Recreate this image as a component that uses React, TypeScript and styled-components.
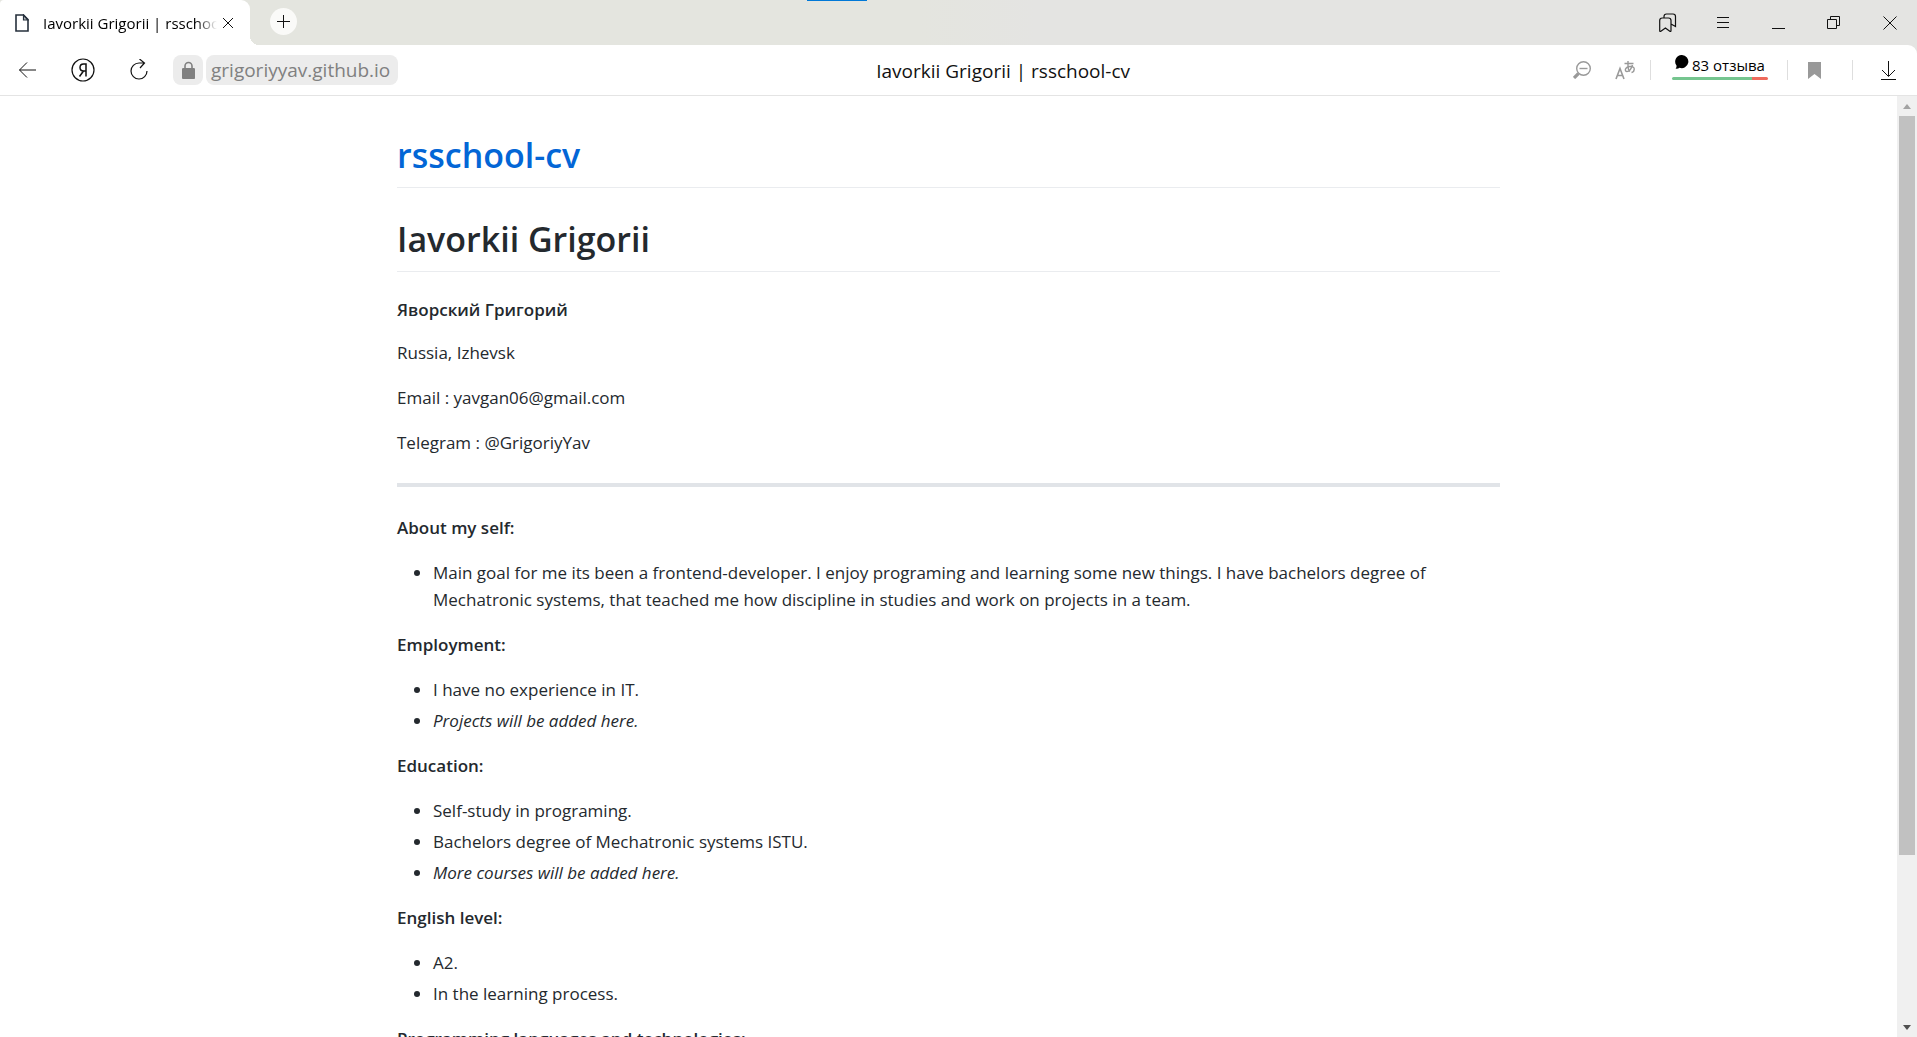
import React from "react";
import styled, { createGlobalStyle } from "styled-components";

const GlobalStyle = createGlobalStyle`
  * { box-sizing: border-box; }
  body {
    margin: 0;
    background: #fff;
    color: #24292e;
    font-family: "Open Sans", "Noto Sans", sans-serif;
  }
  button { font: inherit; color: inherit; border: 0; padding: 0; background: none; cursor: pointer; }
`;

const Window = styled.div`
  display: flex;
  flex-direction: column;
  height: 100vh;
  overflow: hidden;
  background: #fff;
`;

const TabStrip = styled.header`
  position: relative;
  display: flex;
  align-items: stretch;
  justify-content: space-between;
  height: 45px;
  flex: none;
  background: linear-gradient(90deg, #e4e5df 0%, #e4e5df 48%, #e4e4e2 54%, #e4e4e2 100%);
`;

const ActivityMark = styled.span`
  position: absolute;
  top: 0;
  left: calc(42% + 2px);
  width: 60px;
  height: 1px;
  background: #0078d7;
`;

const Tabs = styled.div`
  display: flex;
  align-items: center;
  gap: 20px;
`;

const Tab = styled.div`
  position: relative;
  display: flex;
  align-items: center;
  width: 250px;
  height: 45px;
  padding: 0 16px 0 15px;
  border-radius: 4px 9px 0 0;
  background: #fff;
  &::after {
    content: "";
    position: absolute;
    right: -9px;
    bottom: 0;
    width: 9px;
    height: 9px;
    background: radial-gradient(circle at 100% 0, transparent 9px, #fff 9px);
  }
`;

const TabTitle = styled.span`
  flex: 1;
  margin: 0 5px 0 14px;
  overflow: hidden;
  white-space: nowrap;
  font-size: 15px;
  line-height: 24px;
  color: #000;
  mask-image: linear-gradient(90deg, #000 88%, transparent 100%);
`;

const IconButton = styled.button<{ $w?: number; $h?: number }>`
  display: flex;
  align-items: center;
  justify-content: center;
  flex: none;
  width: ${(p) => p.$w ?? 24}px;
  height: ${(p) => p.$h ?? 24}px;
`;

const NewTab = styled(IconButton)`
  border-radius: 50%;
  background: #fafaf8;
  margin-bottom: 2px;
`;

const DownloadButton = styled(IconButton)`
  margin-left: 6px;
`;

const WindowControls = styled.div`
  display: flex;
  align-items: center;
`;

const Toolbar = styled.nav`
  display: flex;
  align-items: center;
  height: 51px;
  border-bottom: 1px solid #e4e4e4;
  border-top-right-radius: 9px;
  background: #fff;
`;

const ToolbarBack = styled.div`
  background: #e4e4e2;
  flex: none;
`;

const NavGroup = styled.div`
  display: flex;
  align-items: center;
`;

const Address = styled.div`
  display: flex;
  align-items: center;
  gap: 3px;
  margin-left: 7px;
`;

const Lock = styled(IconButton)`
  border-radius: 8px;
  background: #ececec;
`;

const Host = styled.button`
  height: 30px;
  padding: 1px 8px 0 5px;
  border-radius: 8px;
  background: #ececec;
  && { color: #808080; }
  font-size: 19px;
  line-height: 29px;
`;

const PageTitle = styled.span`
  flex: 1;
  padding: 1px 0 0 44px;
  overflow: hidden;
  color: #111;
  font-size: 19px;
  line-height: 30px;
  text-align: center;
  text-overflow: ellipsis;
  white-space: nowrap;
`;

const Tools = styled.div`
  display: flex;
  align-items: center;
  flex: none;
`;

const Divider = styled.span<{ $gap?: number }>`
  width: 1px;
  height: 20px;
  margin-left: ${(p) => p.$gap ?? 0}px;
  background: #dedede;
`;

const Reviews = styled.button`
  display: flex;
  flex-direction: column;
  gap: 2px;
  width: 96px;
  margin: 0 19px 6px 21px;
`;

const ReviewLabel = styled.span`
  display: flex;
  gap: 3px;
  padding-left: 3px;
  color: #000;
  font-size: 15px;
  line-height: 20px;
  white-space: nowrap;
`;

const ReviewBar = styled.span`
  display: block;
  width: 100%;
  height: 3px;
  border-radius: 2px;
  background: linear-gradient(90deg, #75c58f 83%, #ee6a5c 83%);
`;

const Viewport = styled.div`
  display: flex;
  flex: 1;
  min-height: 0;
`;

const Scroller = styled.main`
  flex: 1;
  min-width: 0;
  overflow: hidden;
`;

const Article = styled.article`
  max-width: 1139px;
  margin: 0 auto;
  padding: 35px 18px;
  font-size: 17px;
  line-height: 27px;
`;

const Title = styled.h1`
  margin: 0 0 27px;
  padding: 2px 0 9px;
  border-bottom: 1px solid #eaecef;
  font-size: 34px;
  font-weight: 600;
  line-height: 45px;
  a { color: #0366d6; text-decoration: none; }
`;

const FullName = styled.h4`
  margin: 0 0 18px;
  font-size: 17px;
  font-weight: 600;
  line-height: 22px;
`;

const Paragraph = styled.p`
  margin: 0 0 18px;
  strong { font-weight: 600; }
`;

const Rule = styled.hr`
  height: 4px;
  margin: 27px 0;
  border: 0;
  background: #e1e4e8;
`;

const List = styled.ul`
  margin: 0 0 18px;
  padding-left: 36px;
  li + li { margin-top: 4px; }
`;

const Scrollbar = styled.div`
  display: flex;
  flex-direction: column;
  flex: none;
  width: 20px;
  background: #f0f0f0;
`;

const Track = styled.div`
  flex: 1;
  padding: 0 2px;
`;

const Thumb = styled.div`
  height: 82%;
  background: #c1c1c1;
`;

const Icon = ({ w, h, children, ...rest }: { w: number; h: number; children: React.ReactNode } & React.SVGProps<SVGSVGElement>) => (
  <svg width={w} height={h} viewBox={`0 0 ${w} ${h}`} fill="none" stroke="#111" strokeWidth="1.2" aria-hidden="true" {...rest}>
    {children}
  </svg>
);

const sections: { title: string; items: { text: string; em?: boolean }[] }[] = [
  {
    title: "About my self:",
    items: [
      {
        text: "Main goal for me its been a frontend-developer. I enjoy programing and learning some new things. I have bachelors degree of Mechatronic systems, that teached me how discipline in studies and work on projects in a team.",
      },
    ],
  },
  {
    title: "Employment:",
    items: [{ text: "I have no experience in IT." }, { text: "Projects will be added here.", em: true }],
  },
  {
    title: "Education:",
    items: [
      { text: "Self-study in programing." },
      { text: "Bachelors degree of Mechatronic systems ISTU." },
      { text: "More courses will be added here.", em: true },
    ],
  },
  { title: "English level:", items: [{ text: "A2." }, { text: "In the learning process." }] },
  { title: "Programming languages and technologies:", items: [] },
];

export default function App() {
  return (
    <Window>
      <GlobalStyle />
      <TabStrip>
        <ActivityMark />
        <Tabs>
          <Tab>
            <Icon w={14} h={18} stroke="#26303c" strokeWidth="1.6">
              <path d="M1 1h7.5L13 5.5V17H1z" />
              <path d="M8.5 1v5H13z" fill="#26303c" fillOpacity="0.3" strokeWidth="1.2" />
            </Icon>
            <TabTitle>Iavorkii Grigorii | rsschool-cv</TabTitle>
            <IconButton $w={12} aria-label="Close tab">
              <Icon w={12} h={12} strokeWidth="1"><path d="M1 1l10 10M11 1L1 11" /></Icon>
            </IconButton>
          </Tab>
          <NewTab $w={27} $h={27} aria-label="New tab">
            <Icon w={13} h={13} strokeWidth="1"><path d="M6.5 0v13M0 6.5h13" /></Icon>
          </NewTab>
        </Tabs>
        <WindowControls>
          <IconButton $w={54} aria-label="Collections">
            <Icon w={18} h={20}>
              <path d="M.7 17.5V7.5Q.7 5 3.2 5h6.3Q12 5 12 7.5v10q0 1.5-1.2.7L6.4 15l-4.5 3.2Q.7 19 .7 17.5zM5 5V3.5Q5 1 7.5 1h6.5Q16.5 1 16.5 3.5V13.5L12 11" />
            </Icon>
          </IconButton>
          <IconButton $w={56} aria-label="Menu">
            <Icon w={12} h={12} strokeWidth="1"><path d="M0 .5h12M0 5.5h12M0 10.5h12" /></Icon>
          </IconButton>
          <IconButton $w={54} aria-label="Minimize">
            <Icon w={13} h={13} strokeWidth="1"><path d="M0 12.5h13" /></Icon>
          </IconButton>
          <IconButton $w={57} aria-label="Restore">
            <Icon w={13} h={13} strokeWidth="1"><path d="M.5 3.5h9v9h-9zM3.5 3.5v-3h9v9h-3" /></Icon>
          </IconButton>
          <IconButton $w={55} aria-label="Close window">
            <Icon w={14} h={14} strokeWidth="1"><path d="M.5.5l13 13M13.5.5l-13 13" /></Icon>
          </IconButton>
        </WindowControls>
      </TabStrip>
      <ToolbarBack>
        <Toolbar>
          <NavGroup>
            <IconButton $w={55} aria-label="Back">
              <Icon w={17} h={16} strokeWidth="1"><path d="M8 .5L.5 8 8 15.5M.5 8H17" /></Icon>
            </IconButton>
            <IconButton $w={56} aria-label="Yandex">
              <Icon w={24} h={24}>
                <circle cx="12" cy="12" r="11" />
                <path d="M15 18.5V6h-2.5Q9 6 9 9.5T12.5 13H15M12.5 13L8.500 18.5" strokeWidth="1.5" />
              </Icon>
            </IconButton>
            <IconButton $w={55} aria-label="Reload">
              <Icon w={18} h={22}><path d="M17 12a8 8 0 1 1-8-8h5M9.5 0l5 4-4.5 5" /></Icon>
            </IconButton>
            <Address>
              <Lock $w={30} $h={30} aria-label="Site information">
                <Icon w={13} h={18} stroke="#808080">
                  <path d="M3 8V5a3.5 3.5 0 0 1 7 0v3" strokeWidth="1.6" />
                  <rect x="0.5" y="7.5" width="12" height="10" rx="1" fill="#808080" />
                </Icon>
              </Lock>
              <Host>grigoriyyav.github.io</Host>
            </Address>
          </NavGroup>
          <PageTitle>Iavorkii Grigorii | rsschool-cv</PageTitle>
          <Tools>
            <IconButton $w={36} aria-label="Zoom out">
              <Icon w={18} h={18} stroke="#999" strokeWidth="1.4">
                <circle cx="10.5" cy="7.5" r="6.8" />
                <path d="M6.5 7.5h8" />
                <path d="M5.5 12.5L1 17" strokeWidth="3.2" />
              </Icon>
            </IconButton>
            <IconButton $w={50} aria-label="Translate">
              <Icon w={20} h={20} stroke="#999">
                <path d="M1 19L5 8.5L9 19M2.5 15.5h5" strokeWidth="1.6" />
                <path d="M9.5 3.5h9M13 1v5q0 4 2 5.5M17.5 5q-2 6.5-5.5 6.5-2 0-1.5-2.5Q12 6 16 6.5t3 3.5Q19 12 16.5 12.5" strokeWidth="1.4" />
              </Icon>
            </IconButton>
            <Divider />
            <Reviews>
              <ReviewLabel>
                <Icon w={14} h={14} stroke="none">
                  <path d="M7 0a6.6 6.6 0 1 1-2.5 12.8Q3 14 .6 13.6 1.8 12.5 1.5 10.5A6.6 6.6 0 0 1 7 0z" fill="#000" />
                </Icon>
                83 отзыва
              </ReviewLabel>
              <ReviewBar />
            </Reviews>
            <Divider />
            <IconButton $w={52} aria-label="Bookmark">
              <Icon w={13} h={17} stroke="none"><path d="M0 0h13v17l-6.5-5L0 17z" fill="#999" /></Icon>
            </IconButton>
            <Divider $gap={12} />
            <DownloadButton $w={58} aria-label="Downloads">
              <Icon w={15} h={19} strokeWidth="1"><path d="M7.5 0v15M1 9l6.5 6.500L14 9M0 18.5h15" /></Icon>
            </DownloadButton>
          </Tools>
        </Toolbar>
      </ToolbarBack>
      <Viewport>
        <Scroller>
          <Article>
            <Title><a href="#top">rsschool-cv</a></Title>
            <Title>Iavorkii Grigorii</Title>
            <FullName>Яворский Григорий</FullName>
            <Paragraph>Russia, Izhevsk</Paragraph>
            <Paragraph>Email : yavgan06@gmail.com</Paragraph>
            <Paragraph>Telegram : @GrigoriyYav</Paragraph>
            <Rule />
            {sections.map((s) => (
              <React.Fragment key={s.title}>
                <Paragraph><strong>{s.title}</strong></Paragraph>
                {s.items.length > 0 && (
                  <List>
                    {s.items.map((i) => (
                      <li key={i.text}>{i.em ? <em>{i.text}</em> : i.text}</li>
                    ))}
                  </List>
                )}
              </React.Fragment>
            ))}
          </Article>
        </Scroller>
        <Scrollbar>
          <IconButton $w={20} $h={20} aria-label="Scroll up">
            <Icon w={8} h={5} stroke="none"><path d="M0 5l4-5 4 5z" fill="#a3a3a3" /></Icon>
          </IconButton>
          <Track><Thumb /></Track>
          <IconButton $w={20} $h={20} aria-label="Scroll down">
            <Icon w={8} h={5} stroke="none"><path d="M0 0l4 5 4-5z" fill="#505050" /></Icon>
          </IconButton>
        </Scrollbar>
      </Viewport>
    </Window>
  );
}
